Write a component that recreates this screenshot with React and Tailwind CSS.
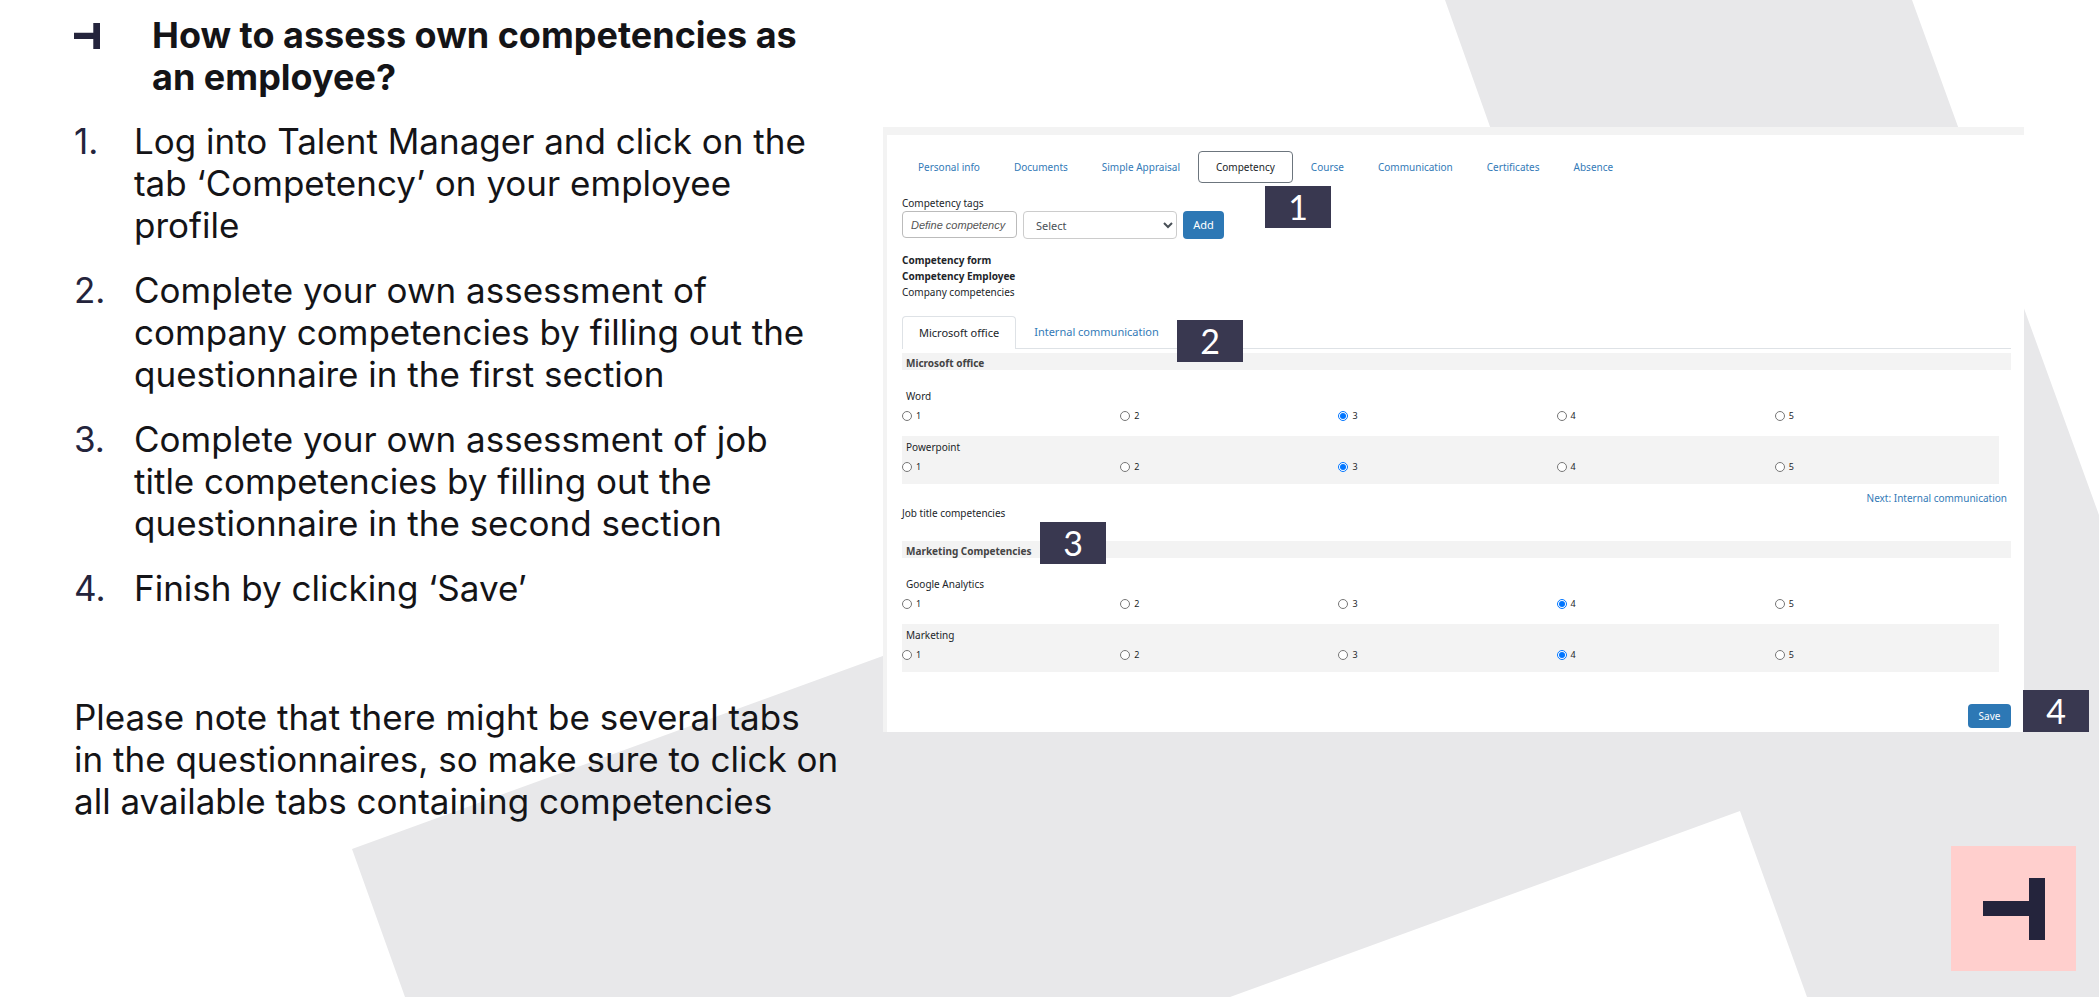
const steps = [
  ['Log into Talent Manager and click on the', 'tab ‘Competency’ on your employee', 'profile'],
  ['Complete your own assessment of', 'company competencies by filling out the', 'questionnaire in the first section'],
  ['Complete your own assessment of job', 'title competencies by filling out the', 'questionnaire in the second section'],
  ['Finish by clicking ‘Save’'],
];

const tabs = ['Personal info', 'Documents', 'Simple Appraisal', 'Competency', 'Course', 'Communication', 'Certificates', 'Absence'];

function Lines({ lines }) {
  return lines.map((line) => (
    <span key={line} className="block whitespace-nowrap">{line}</span>
  ));
}

function Mark({ className }) {
  return (
    <svg viewBox="0 0 62 62" className={className} preserveAspectRatio="none" aria-hidden="true">
      <path d="M0 23h46V0h16v62H46V38H0z" fill="#24243c" />
    </svg>
  );
}

function Callout({ n, className }) {
  return (
    <span className={`absolute flex h-[42px] w-[66px] items-center justify-center bg-[#393850] font-['Lato',sans-serif] text-[34px] leading-none text-white ${className}`}>
      {n}
    </span>
  );
}

function Question({ name, value, shaded, compact }) {
  return (
    <fieldset className={`mr-3 ${compact ? 'h-[48px]' : 'h-[51px]'} ${shaded ? 'bg-[#f3f3f3]' : ''}`}>
      <legend className="float-left w-full px-1 pt-1 text-[10px] leading-[14px]">{name}</legend>
      <div className="clear-both grid grid-cols-5 pt-[6px] pr-[6px]">
        {[1, 2, 3, 4, 5].map((n) => (
          <label key={n} className="flex h-[14px] items-center gap-1 text-[9px] leading-[14px]">
            <input type="radio" name={name} defaultChecked={n === value} className="size-[10px] accent-[#0075ff]" />
            {n}
          </label>
        ))}
      </div>
    </fieldset>
  );
}

function SectionBar({ children }) {
  return <h3 className="h-[17px] bg-[#f3f3f3] px-1 text-[10px] leading-[20px] font-bold text-[#444]">{children}</h3>;
}

function EmployeePanel() {
  return (
    <section className="relative border-t-8 border-l-4 border-[#f3f3f3] bg-white pt-4 pr-[13px] pb-1 pl-[15px] font-['Noto_Sans',sans-serif] text-[10px] leading-4 text-[#212529]">
      <nav className="flex h-8 items-center gap-0.5">
        {tabs.map((t) => (
          <a key={t} href="#" className={t === 'Competency' ? 'rounded border border-[#6c757d] px-[17px] py-[7px] text-[#212529]' : 'px-4 text-[#337ab7]'}>{t}</a>
        ))}
      </nav>
      <label htmlFor="tag" className="mt-3 block">Competency tags</label>
      <div className="flex gap-[6px]">
        <input id="tag" placeholder="Define competency" className="h-[27px] w-[115px] rounded-sm border border-[#bbb] px-2 font-['Liberation_Sans',sans-serif] text-[11px] italic placeholder:text-[#555]" />
        <select aria-label="Competency" className="h-7 w-[154px] rounded-sm border border-[#ccc] bg-white px-2 text-[11px] text-[#495057]">
          <option>Select</option>
        </select>
        <button type="button" className="h-7 w-[41px] rounded-sm bg-[#2d78b5] text-[11px] text-white">Add</button>
      </div>
      <div className="pt-[13px]">
        <h2 className="font-bold">Competency form</h2>
        <h2 className="font-bold">Competency Employee</h2>
        <p>Company competencies</p>
      </div>
      <div className="mt-4 flex h-[33px] items-stretch border-b border-[#dee2e6] text-[11px] leading-8">
        <button type="button" className="-mb-px rounded-t border border-b-0 border-[#dee2e6] bg-white px-4">Microsoft office</button>
        <button type="button" className="px-[18px] text-[#337ab7]">Internal communication</button>
      </div>
      <div className="mt-1"><SectionBar>Microsoft office</SectionBar></div>
      <div className="pt-[15px]"><Question name="Word" value={3} /></div>
      <Question name="Powerpoint" value={3} shaded compact />
      <p className="pt-[7px] pr-1 text-right leading-[15px]"><a href="#" className="text-[#337ab7]">Next: Internal communication</a></p>
      <p className="leading-[15px]">Job title competencies</p>
      <div className="mt-5"><SectionBar>Marketing Competencies</SectionBar></div>
      <div className="pt-[15px]"><Question name="Google Analytics" value={4} /></div>
      <Question name="Marketing" value={4} shaded compact />
      <div className="flex justify-end pt-8">
        <button type="button" className="h-6 w-[43px] rounded-sm bg-[#2d78b5] text-white">Save</button>
      </div>
      <Callout n={1} className="top-[51px] left-[378px]" />
      <Callout n={2} className="top-[185px] left-[290px]" />
      <Callout n={3} className="top-[387px] left-[153px]" />
      <Callout n={4} className="right-[-65px] bottom-0" />
    </section>
  );
}

export default function App() {
  return (
    <main className="relative isolate min-h-screen overflow-hidden bg-white font-['Inter',sans-serif] text-[#141417]">
      <svg viewBox="0 0 2099 997" preserveAspectRatio="none" className="absolute inset-0 -z-10 size-full" aria-hidden="true">
        <path d="M1445 0H1912L2099 515V997H1807L1740 811L1230 997H405L352 849L1642 380L1580 380Z" fill="#e8e8ea" />
      </svg>
      <div className="flex items-start pr-[75px] pl-[74px]">
        <article className="w-[809px] shrink-0 pt-[14px] text-[35px] leading-[42px]">
          <h1 className="flex text-[36px] font-bold">
            <Mark className="mt-[9px] mr-[52px] h-[26px] w-[26px]" />
            <span><Lines lines={['How to assess own competencies as', 'an employee?']} /></span>
          </h1>
          <ol className="mt-[22px] space-y-[23px]">
            {steps.map((lines, i) => (
              <li key={i} className="flex">
                <span className="w-[60px] text-[#24243c]">{i + 1}.</span>
                <span><Lines lines={lines} /></span>
              </li>
            ))}
          </ol>
          <p className="mt-[87px]">
            <Lines lines={['Please note that there might be several tabs', 'in the questionnaires, so make sure to click on', 'all available tabs containing competencies']} />
          </p>
        </article>
        <div className="min-w-0 flex-1 pt-[127px]"><EmployeePanel /></div>
      </div>
      <div className="absolute right-[23px] bottom-[26px] flex size-[125px] items-center justify-center bg-[#ffcfcd]">
        <Mark className="size-[62px]" />
      </div>
    </main>
  );
}
